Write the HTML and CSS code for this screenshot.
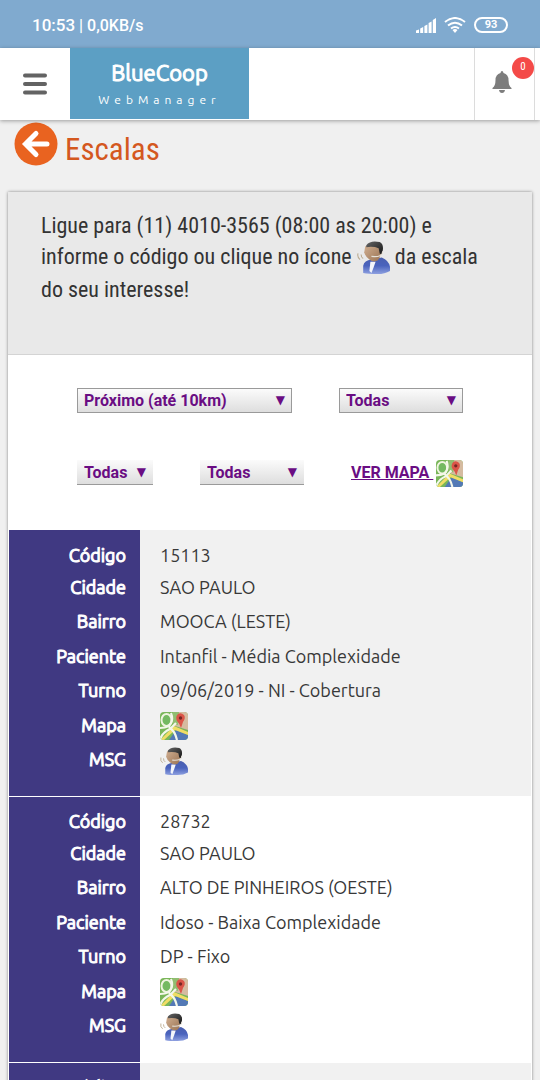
FILE: index.html
```html
<!DOCTYPE html>
<html lang="pt-BR">
<head>
<meta charset="utf-8">
<meta name="viewport" content="width=device-width, initial-scale=1">
<title>BlueCoop WebManager - Escalas</title>
<link rel="stylesheet" href="styles.css">
</head>
<body>
<svg class="sprite" aria-hidden="true">
  <defs>
    <linearGradient id="shirt" x1="0" y1="0" x2="0" y2="1"><stop offset="0" stop-color="#4a5fb0"/><stop offset=".5" stop-color="#4a63bd"/><stop offset="1" stop-color="#8ea0e0"/></linearGradient>
    <linearGradient id="skin" x1="0" y1="0" x2="1" y2="1"><stop offset="0" stop-color="#d2b092"/><stop offset="1" stop-color="#9a7454"/></linearGradient>
    <linearGradient id="hair" x1="0" y1="0" x2="1" y2="1"><stop offset="0" stop-color="#666"/><stop offset="1" stop-color="#151515"/></linearGradient>
    <clipPath id="tile"><rect width="28" height="28" rx="4"/></clipPath>
  </defs>
  <symbol id="agent" viewBox="0 0 32 32">
    <path d="M6 31V24Q7 19 14 18L24 16Q31 19 32 25V29Q27 32 20 32Q11 32 6 31Z" fill="url(#shirt)"/>
    <path d="M13 20L18 20L16 26L14 31L12 29Z" fill="#f4f6fb"/>
    <path d="M8 5Q15 2 23 5V13Q22 17 20 19Q16 21 12 18Q8 15 7 11Z" fill="url(#skin)"/>
    <path d="M9 4Q13 -1 22 1Q26 3 25 9L24 13L22 12L21 7Q16 5 9 6Z" fill="url(#hair)"/>
    <path d="M25 10Q25 16 14 15" fill="none" stroke="#e6e1d8" stroke-width="1.2"/>
    <path d="M1 12Q0 16 3 18M4 13Q4 16 6 17" fill="none" stroke="#b9a98d" stroke-width="1"/>
  </symbol>
  <symbol id="map" viewBox="0 0 28 28">
    <g clip-path="url(#tile)">
      <path d="M0 0H28V28H0Z" fill="#79b659"/>
      <path d="M15 0H28V18L15 14Z" fill="#d5bba0"/>
      <path d="M13 0H19L18 13L13 12Z" fill="#91bd70"/>
      <path d="M9 28L16 18L28 23V28Z" fill="#5379b6"/>
      <path d="M14 14L28 20V23L15 18L4 28H0Z" fill="#f0dd65"/>
      <ellipse cx="6.500" cy="8" rx="5" ry="6" fill="#74b961" stroke="#eff4df" stroke-width="2"/>
      <path d="M11 1Q14 9 9 14Q5 16 0 16M9 15Q15 19 17 28M0 27Q3 20 10 17L16 11" fill="none" stroke="#f4f7ea" stroke-width="2.200"/>
      <path d="M21 16Q20 12 17 9Q15 5 18 2Q21 0 24 3Q26 6 23 10Z" fill="#db5548"/>
      <circle cx="20.500" cy="6" r="1.700" fill="#762725"/>
    </g>
  </symbol>
</svg>

<div class="status">
  <div class="status-text"><span class="clock">10:53</span> | 0,0KB/s</div>
  <div class="status-icons">
    <svg class="signal" viewBox="0 0 20 15"><path d="M0 12.500L3 11.500V15H0ZM4.200 10.500L7.200 9V15H4.200ZM8.400 8L11.400 6.500V15H8.400ZM12.600 5L15.600 3.500V15H12.600ZM16.800 2L20 0V15H16.800Z"/></svg>
    <svg class="wifi" viewBox="0 0 22 16"><path d="M1 5Q11 -3 21 5M4 8.500Q11 3 18 8.500M7 11.500Q11 8.500 15 11.500"/><path class="dot" d="M8.500 13Q11 11 13.500 13L11 16Z"/></svg>
    <span class="battery">93</span>
  </div>
</div>

<header class="topbar">
  <button class="menu" type="button" aria-label="Menu">
    <svg viewBox="0 0 24 22"><path d="M2 2.500H22M2 11H22M2 19.500H22"/></svg>
  </button>
  <a class="brand" href="#"><strong class="brand-name">BlueCoop</strong><span class="brand-sub">WebManager</span></a>
  <button class="alerts" type="button" aria-label="Notificações">
    <svg viewBox="0 0 20 22"><path d="M10 0Q11.200 0 11.500 2Q16.500 3.500 16.500 9Q16.500 15 19.500 17V18H.500V17Q3.500 15 3.500 9Q3.500 3.500 8.500 2Q8.800 0 10 0ZM7 19H13Q12.500 22 10 22Q7.500 22 7 19Z"/></svg>
    <span class="badge">0</span>
  </button>
</header>

<main>
  <div class="page-title">
    <a class="back" href="#" aria-label="Voltar"><svg viewBox="0 0 44 44"><circle cx="22" cy="22" r="21.500"/><path d="M33 22H12M22 11.500L11.500 22L22 32.500"/></svg></a>
    <h1>Escalas</h1>
  </div>

  <section class="card">
    <p class="intro">Ligue para (11) 4010-3565 (08:00 as 20:00) e informe o código ou clique no ícone <svg class="intro-icon"><use href="#agent"/></svg> da escala do seu interesse!</p>

    <form class="filters">
      <span class="pick pick-distance framed"><select aria-label="Distância"><option>Próximo (até 10km)</option></select></span>
      <span class="pick pick-region framed"><select aria-label="Região"><option>Todas</option></select></span>
      <span class="pick pick-shift"><select aria-label="Turno"><option>Todas</option></select></span>
      <span class="pick pick-type"><select aria-label="Tipo"><option>Todas</option></select></span>
      <a class="map-link" href="#"><span>VER MAPA&nbsp;</span><svg><use href="#map"/></svg></a>
    </form>

    <table class="shifts">
      <tbody>
        <tr><th scope="row">Código</th><td>15113</td></tr>
        <tr><th scope="row">Cidade</th><td>SAO PAULO</td></tr>
        <tr><th scope="row">Bairro</th><td>MOOCA (LESTE)</td></tr>
        <tr><th scope="row">Paciente</th><td>Intanfil - Média Complexidade</td></tr>
        <tr><th scope="row">Turno</th><td>09/06/2019 - NI - Cobertura</td></tr>
        <tr class="icon-row"><th scope="row">Mapa</th><td><a href="#" aria-label="Mapa"><svg><use href="#map"/></svg></a></td></tr>
        <tr class="icon-row"><th scope="row">MSG</th><td><a href="#" aria-label="Mensagem"><svg><use href="#agent"/></svg></a></td></tr>
      </tbody>
      <tbody>
        <tr><th scope="row">Código</th><td>28732</td></tr>
        <tr><th scope="row">Cidade</th><td>SAO PAULO</td></tr>
        <tr><th scope="row">Bairro</th><td>ALTO DE PINHEIROS (OESTE)</td></tr>
        <tr><th scope="row">Paciente</th><td>Idoso - Baixa Complexidade</td></tr>
        <tr><th scope="row">Turno</th><td>DP - Fixo</td></tr>
        <tr class="icon-row"><th scope="row">Mapa</th><td><a href="#" aria-label="Mapa"><svg><use href="#map"/></svg></a></td></tr>
        <tr class="icon-row"><th scope="row">MSG</th><td><a href="#" aria-label="Mensagem"><svg><use href="#agent"/></svg></a></td></tr>
      </tbody>
      <tbody>
        <tr><th scope="row">Código</th><td></td></tr>
      </tbody>
    </table>
  </section>
</main>
</body>
</html>
```
FILE: styles.css
```css
* { box-sizing: border-box; }
body {
  margin: 0;
  background: #f0f0f0;
  color: #383838;
  font-family: Ubuntu, "Noto Sans", sans-serif;
}
button { border: 0; padding: 0; background: none; }
svg { display: block; }
.sprite { position: absolute; width: 0; height: 0; }

.status {
  display: flex;
  justify-content: space-between;
  align-items: center;
  height: 48px;
  padding: 2px 32px 0;
  background: #80aacf;
  color: #fff;
  font: 500 16px Roboto, sans-serif;
}
.clock { font-size: 17px; }
.status-icons { display: flex; align-items: center; gap: 8px; }
.signal { width: 20px; height: 15px; fill: #fff; }
.wifi { width: 22px; height: 16px; fill: none; stroke: #fff; stroke-width: 2; }
.wifi .dot { fill: #fff; stroke: none; }
.battery {
  width: 34px;
  height: 16px;
  border: 2px solid #fff;
  border-radius: 8px;
  font-size: 11px;
  font-weight: 700;
  line-height: 12px;
  text-align: center;
}

.topbar {
  position: relative;
  display: flex;
  height: 72px;
  padding-right: 5px;
  background: #fff;
  box-shadow: 0 1px 4px rgba(0, 0, 0, .35);
}
.menu { display: grid; place-items: center; width: 70px; }
.menu svg { width: 24px; height: 22px; stroke: #636363; stroke-width: 4; stroke-linecap: round; }
.brand {
  display: flex;
  flex-direction: column;
  align-items: center;
  width: 179px;
  height: 71px;
  padding-top: 10px;
  background: #5c9fc4;
  color: #fff;
  text-decoration: none;
}
.brand-name { font-size: 22px; font-weight: 400; line-height: 30px; -webkit-text-stroke: 1px; }
.brand-sub { font-size: 12px; line-height: 24px; letter-spacing: 5px; }
.alerts {
  position: relative;
  width: 61px;
  margin-left: auto;
  border: solid #dcdcdc;
  border-width: 0 1px;
}
.alerts svg { width: 20px; height: 22px; margin-left: 17px; margin-bottom: 4px; fill: #7d7d7d; }
.badge {
  position: absolute;
  top: 9px;
  right: 0;
  width: 22px;
  height: 22px;
  border-radius: 50%;
  background: #f44a48;
  color: #fff;
  font: 11px/20px "Roboto Condensed", Roboto, sans-serif;
  text-align: center;
}

main { padding: 0 8px; }
.page-title { display: flex; gap: 7px; height: 72px; padding: 2px 6px 0; }
.back svg { width: 44px; height: 44px; fill: #e96320; }
.back path { fill: none; stroke: #fff; stroke-width: 5; stroke-linecap: round; }
h1 {
  margin: 8px 0 0;
  color: #d4581f;
  font: 400 31px/40px "Roboto Condensed", "Liberation Sans Narrow", Roboto, sans-serif;
}

.card { padding: 0 1px; background: #fff; box-shadow: 0 0 3px rgba(0, 0, 0, .45); }
.intro {
  min-height: 163px;
  margin: 0 -1px;
  padding: 18px 32px 48px 33px;
  border-bottom: 1px solid #d4d4d4;
  background: #e9e9e9;
  color: #333;
  font: 400 22px/31px "Roboto Condensed", "Liberation Sans Narrow", Roboto, sans-serif;
}
.intro-icon { display: inline-block; width: 33px; height: 33px; vertical-align: -10px; }

.filters {
  display: flex;
  flex-wrap: wrap;
  justify-content: center;
  align-items: flex-start;
  gap: 47px;
  padding: 33px 60px 43px;
  color: #6a0d83;
  font: 700 16px Roboto, sans-serif;
}
.pick { position: relative; height: 25px; }
.pick::after {
  content: "▼";
  position: absolute;
  top: 0;
  right: 7px;
  font: 12px/24px "DejaVu Sans", sans-serif;
  pointer-events: none;
}
.pick select {
  appearance: none;
  display: block;
  width: 100%;
  height: 100%;
  padding: 0 7px;
  border: solid #9a9a9a;
  border-width: 0 0 1px;
  border-radius: 0;
  background: linear-gradient(#fbfbfb, #dedede);
  color: inherit;
  font: inherit;
}
.framed select { padding: 0 6px; border-width: 1px; }
.pick-distance { width: 215px; }
.pick-region { width: 124px; }
.pick-shift { width: 76px; }
.pick-type { width: 104px; }
.map-link { display: flex; width: 112px; color: inherit; line-height: 25px; text-decoration: underline; white-space: nowrap; }
.map-link svg { flex: none; width: 27px; height: 27px; margin-left: auto; }

.shifts { width: 100%; border-collapse: collapse; font-size: 18px; line-height: 24px; }
.shifts th, .shifts td { height: 34px; padding: 0 20px; }
.shifts th {
  width: 131px;
  padding: 0 14px 0 0;
  background: #403982;
  color: #fff;
  font-weight: 400;
  -webkit-text-stroke: 1px;
  text-align: right;
}
.shifts tbody:nth-child(odd) td { background: #f1f1f1; }
.shifts tr:nth-child(4) > *, .shifts .icon-row > * { height: 35px; }
.shifts tr:first-child > * { height: 40px; padding-top: 9px; }
.shifts tr:last-child:not(:first-child) > * { height: 54px; padding-bottom: 19px; }
.shifts tbody + tbody { border-top: 1px solid #fff; }
.shifts td svg { width: 28px; height: 28px; margin-top: 3px; }
```
